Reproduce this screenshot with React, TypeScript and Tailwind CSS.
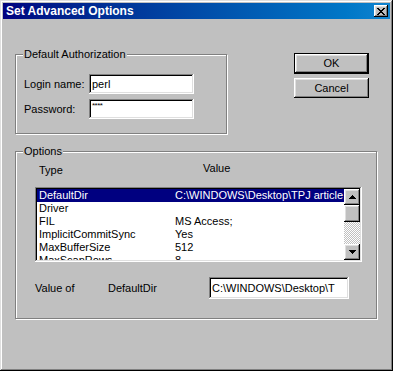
import React from "react";

const raised =
  "shadow-[inset_-1px_-1px_#000000,inset_1px_1px_#ffffff,inset_-2px_-2px_#808080,inset_2px_2px_#dfdfdf]";
const sunken =
  "shadow-[inset_-1px_-1px_#ffffff,inset_1px_1px_#808080,inset_-2px_-2px_#dfdfdf,inset_2px_2px_#000000]";

function Group({
  label,
  className,
  children,
}: {
  label: string;
  className: string;
  children: React.ReactNode;
}) {
  return (
    <div
      className={`relative border border-[#808080] shadow-[inset_1px_1px_#ffffff,1px_1px_#ffffff] ${className}`}
    >
      <span className="absolute left-[7px] top-[-7px] bg-[#c0c0c0] px-[1px] leading-[13px]">
        {label}
      </span>
      {children}
    </div>
  );
}

function TextBox({
  children,
  className,
}: {
  children: React.ReactNode;
  className: string;
}) {
  return (
    <div
      className={`bg-white ${sunken} flex items-center overflow-hidden whitespace-nowrap pl-[3px] ${className}`}
    >
      {children}
    </div>
  );
}

function Arrow({ up }: { up: boolean }) {
  return (
    <div className={`w-[16px] h-[16px] bg-[#c0c0c0] ${raised} flex items-center justify-center`}>
      <svg width="7" height="4" viewBox="0 0 7 4">
        {up ? (
          <path d="M3 0h1v1h1v1h1v1h1v1H0V3h1V2h1V1h1z" fill="#000" />
        ) : (
          <path d="M0 0h7v1H6v1H5v1H4v1H3V3H2V2H1V1H0z" fill="#000" />
        )}
      </svg>
    </div>
  );
}

const rows: [string, string][] = [
  ["DefaultDir", "C:\\WINDOWS\\Desktop\\TPJ article"],
  ["Driver", ""],
  ["FIL", "MS Access;"],
  ["ImplicitCommitSync", "Yes"],
  ["MaxBufferSize", "512"],
  ["MaxScanRows", "8"],
];

export default function App() {
  return (
    <div
      className="w-[393px] h-[371px] bg-[#c0c0c0] p-[3px] text-[11px] leading-[13px] text-black shadow-[inset_-1px_-1px_#000000,inset_1px_1px_#dfdfdf,inset_-2px_-2px_#808080,inset_2px_2px_#ffffff] overflow-hidden"
      style={{ fontFamily: '"Liberation Sans", Arial, sans-serif' }}
    >
      {/* Title bar */}
      <div className="h-[16px] bg-gradient-to-r from-[#000080] to-[#1084d0] flex items-center justify-between pl-[3px] pr-[2px]">
        <span className="text-white font-bold text-[12px] leading-[14px]">Set Advanced Options</span>
        <div className={`w-[14px] h-[12px] bg-[#c0c0c0] ${raised} flex items-center justify-center`}>
          <svg width="8" height="7" viewBox="0 0 8 7">
            <path
              d="M0 0h2v1h1v1h2V1h1V0h2v1H7v1H6v1H5v1h1v1h1v1h1v1H6V6H5V5H3v1H2v1H0V6h1V5h1V4h1V3H2V2H1V1H0z"
              fill="#000"
            />
          </svg>
        </div>
      </div>

      <div className="pl-[12px]">
        {/* Row 1 */}
        <div className="flex items-start mt-[35px]">
          <Group label="Default Authorization" className="w-[212px] h-[80px]">
            <div className="pt-[19px] pl-[8px]">
              <div className="flex items-center">
                <span className="w-[65px]">Login name:</span>
                <TextBox className="w-[105px] h-[20px]">perl</TextBox>
              </div>
              <div className="flex items-center mt-[5px]">
                <span className="w-[65px]">Password:</span>
                <div
                  className={`bg-white ${sunken} w-[105px] h-[20px] pl-[3px] pt-[3px] text-[8px] leading-[8px] tracking-[-0.5px]`}
                >
                  ****
                </div>
              </div>
            </div>
          </Group>
          <div className="ml-[67px] mt-[-1px] flex flex-col gap-[4px]">
            <div className="w-[75px] h-[21px] border border-black">
              <div className={`w-full h-full ${raised} flex items-center justify-center`}>OK</div>
            </div>
            <div className={`w-[75px] h-[20px] ${raised} flex items-center justify-center`}>Cancel</div>
          </div>
        </div>

        {/* Options */}
        <Group label="Options" className="w-[362px] h-[168px] mt-[17px]">
          <div className="h-[35px] pt-[10px] pl-[23px] flex items-start">
            <span className="w-[164px] mt-[2px]">Type</span>
            <span>Value</span>
          </div>
          <div className={`ml-[19px] w-[327px] h-[75px] bg-white ${sunken} p-[2px] flex`}>
            <div className="flex-1 overflow-hidden whitespace-nowrap">
              {rows.map(([t, v], i) => (
                <div
                  key={t}
                  className={`flex h-[13px] ${i === 0 ? "bg-[#000080] text-white" : ""}`}
                >
                  <span className="w-[138px] pl-[2px] shrink-0">{t}</span>
                  <span>{v}</span>
                </div>
              ))}
            </div>
            <div className="w-[16px] h-full flex flex-col">
              <Arrow up />
              <div className={`w-[16px] h-[17px] bg-[#c0c0c0] ${raised}`} />
              <div className="flex-1 bg-[image:repeating-conic-gradient(#c0c0c0_0%_25%,#ffffff_0%_50%)] bg-[length:2px_2px]" />
              <Arrow up={false} />
            </div>
          </div>
          <div className="ml-[19px] mt-[15px] flex items-center">
            <span className="w-[73px]">Value of</span>
            <span className="w-[101px]">DefaultDir</span>
            <TextBox className="w-[140px] h-[22px]">C:\WINDOWS\Desktop\T</TextBox>
          </div>
        </Group>
      </div>
    </div>
  );
}
